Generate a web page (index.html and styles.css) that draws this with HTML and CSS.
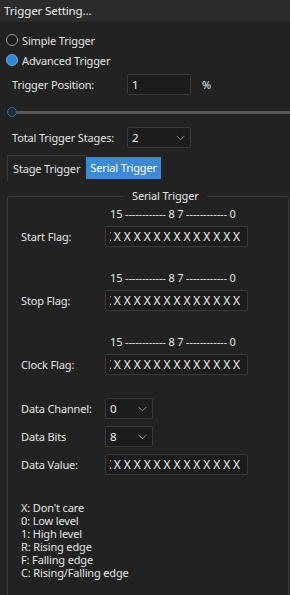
FILE: index.html
```html
<!DOCTYPE html>
<html lang="en">
<head>
    <meta charset="UTF-8">
    <meta name="viewport" content="width=device-width, initial-scale=1.0">
    <title>Trigger Setting</title>
    <link rel="stylesheet" href="styles.css">
</head>
<body>

<div class="panel">
    <div class="title">Trigger Setting...</div>

    <label class="radio"><span class="dot"></span>Simple Trigger</label>
    <label class="radio"><span class="dot on"></span>Advanced Trigger</label>

    <div class="row pos-row">
        <span class="lbl">Trigger Position:</span>
        <input class="box" type="text" value="1">
        <span class="unit">%</span>
    </div>

    <div class="slider"><span class="knob"></span><span class="track"></span></div>

    <div class="row stage-row">
        <span class="lbl">Total Trigger Stages:</span>
        <div class="select wide">2
            <svg class="chev" width="9" height="6" viewBox="0 0 9 6"><path d="M0.5 0.8 L4.5 4.8 L8.5 0.8" fill="none" stroke="#8a8a8a" stroke-width="1"/></svg>
        </div>
    </div>

    <div class="tabs">
        <div class="tab">Stage Trigger</div>
        <div class="tab active">Serial Trigger</div>
    </div>

    <fieldset class="group">
        <legend>Serial Trigger</legend>

        <div class="flag">
            <div class="bits">15 ------------ 8 7 ------------ 0</div>
            <div class="frow"><span class="flbl">Start Flag:</span><input class="mask" type="text" value="XXXXXXXXXXXXXXXX"></div>
        </div>
        <div class="flag">
            <div class="bits">15 ------------ 8 7 ------------ 0</div>
            <div class="frow"><span class="flbl">Stop Flag:</span><input class="mask" type="text" value="XXXXXXXXXXXXXXXX"></div>
        </div>
        <div class="flag">
            <div class="bits">15 ------------ 8 7 ------------ 0</div>
            <div class="frow"><span class="flbl">Clock Flag:</span><input class="mask" type="text" value="XXXXXXXXXXXXXXXX"></div>
        </div>

        <div class="frow data-first"><span class="flbl">Data Channel:</span>
            <div class="select small">0
                <svg class="chev" width="9" height="6" viewBox="0 0 9 6"><path d="M0.5 0.8 L4.5 4.8 L8.5 0.8" fill="none" stroke="#8a8a8a" stroke-width="1"/></svg>
            </div>
        </div>
        <div class="frow data"><span class="flbl">Data Bits</span>
            <div class="select small">8
                <svg class="chev" width="9" height="6" viewBox="0 0 9 6"><path d="M0.5 0.8 L4.5 4.8 L8.5 0.8" fill="none" stroke="#8a8a8a" stroke-width="1"/></svg>
            </div>
        </div>
        <div class="frow data"><span class="flbl">Data Value:</span><input class="mask" type="text" value="XXXXXXXXXXXXXXXX"></div>

        <div class="notes">
            <div>X: Don't care</div>
            <div>0: Low level</div>
            <div>1: High level</div>
            <div>R: Rising edge</div>
            <div>F: Falling edge</div>
            <div>C: Rising/Falling edge</div>
        </div>
    </fieldset>
</div>

</body>
</html>
```

FILE: styles.css
```css
body {
    margin: 0;
    background: #222222;
    color: #e4e4e4;
    font-family: "Noto Sans", sans-serif;
    font-size: 11px;
    letter-spacing: -0.15px;
    width: 290px;
    height: 595px;
    overflow: hidden;
}
.title {
    height: 22px;
    line-height: 22px;
    padding-left: 4px;
    background: #2b2b2b;
    font-size: 11.6px;
    color: #eeeeee;
}

/* radios */
.radio {
    display: flex;
    align-items: center;
    height: 20px;
    padding-left: 6px;
}
.radio:first-of-type {
    margin-top: 8px;
}
.dot {
    width: 10px;
    height: 10px;
    border: 1px solid #9a9a9a;
    border-radius: 50%;
    background: #1c1c1c;
    margin-right: 4px;
}
.dot.on {
    background: #2f87d8;
    border-color: #6aaee6;
}

/* rows */
.row {
    display: flex;
    align-items: center;
    padding-left: 12px;
}
.lbl {
    width: 115px;
}
.pos-row {
    margin-top: 4px;
}
.box, .select, .mask {
    box-sizing: border-box;
    height: 21px;
    background: #1c1c1c;
    border: 1px solid #393939;
    border-radius: 2px;
    color: #f0f0f0;
    font-family: "Noto Sans", sans-serif;
    font-size: 11.5px;
    padding: 0 4px;
    outline: none;
}
.box {
    width: 64px;
}
.unit {
    margin-left: 11px;
}
.select {
    display: flex;
    align-items: center;
    justify-content: space-between;
}
.select.wide {
    width: 64px;
}
.select.small {
    width: 48px;
}
.chev {
    margin-right: 1px;
}

/* slider */
.slider {
    display: flex;
    align-items: center;
    height: 10px;
    margin-top: 12px;
    padding-left: 7px;
}
.knob {
    box-sizing: border-box;
    width: 10px;
    height: 10px;
    border: 1.5px solid #2a6fa8;
    border-radius: 50%;
    background: #1e2a35;
}
.track {
    flex: 1;
    height: 3px;
    background: #5a5a5a;
}
.stage-row {
    margin-top: 10px;
}

/* tabs */
.tabs {
    display: flex;
    margin: 7px 0 0 7px;
}
.tab {
    height: 25px;
    line-height: 25px;
    padding: 0 6px 0 5px;
    border-left: 1px solid #3a3a3a;
    border-top: 1px solid #3a3a3a;
}
.tab.active {
    background: #3a8ad6;
    color: #ffffff;
    height: 22px;
    line-height: 22px;
    margin-top: 2px;
    padding: 0 4px;
    border: none;
}

/* group box */
.group {
    margin: 7px 1px 0 7px;
    padding: 2px 0 20px 13px;
    border: 1px solid #3a3a3a;
    border-radius: 2px;
    min-height: 420px;
}
.group legend {
    margin-left: 103px;
    padding: 0 8px;
    line-height: 16px;
}
.flag {
    margin-bottom: 23px;
}
.bits {
    line-height: 16px;
    margin-left: 89px;
    margin-bottom: 4px;
}
.frow {
    display: flex;
    align-items: center;
}
.flbl {
    width: 84px;
}
.mask {
    width: 143px;
    direction: rtl;
    font-size: 12px;
    letter-spacing: 2.9px;
    padding-right: 4px;
}
.data-first {
    margin-top: 6px;
}
.data {
    margin-top: 7px;
}
.notes {
    margin-top: 26px;
    line-height: 13px;
}
```
